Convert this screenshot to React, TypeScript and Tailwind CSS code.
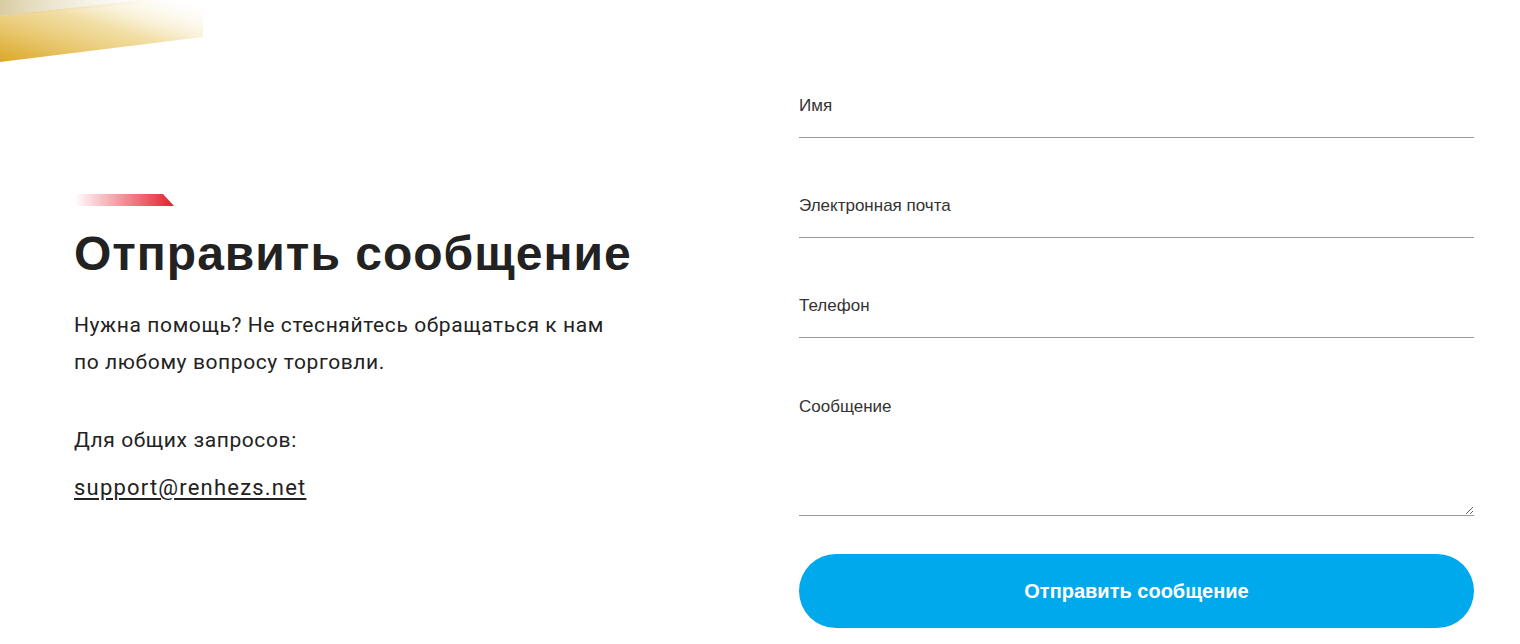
import React from "react";

export default function App() {
  return (
    <div className="relative w-[1520px] h-[644px] bg-white overflow-hidden" style={{ fontFamily: "Roboto, 'Liberation Sans', sans-serif" }}>
      <svg className="absolute left-0 top-0" width="210" height="70" viewBox="0 0 210 70">
        <defs>
          <linearGradient id="gold" x1="0" y1="1" x2="1" y2="0">
            <stop offset="0" stopColor="#dba726" />
            <stop offset="0.55" stopColor="#efd790" stopOpacity="0.8" />
            <stop offset="1" stopColor="#ffffff" stopOpacity="0" />
          </linearGradient>
          <linearGradient id="gold2" x1="0" y1="0" x2="1" y2="0">
            <stop offset="0" stopColor="#cfbf8a" stopOpacity="0.8" />
            <stop offset="1" stopColor="#ffffff" stopOpacity="0" />
          </linearGradient>
        </defs>
        <polygon points="0,0 180,0 0,16" fill="url(#gold2)" />
        <polygon points="0,16 140,0 203,0 203,37 0,62" fill="url(#gold)" />
      </svg>

      <div className="flex h-full">
        <div className="w-[725px] pl-[74px] pt-[194px] text-[#222]">
          <svg width="100" height="12" viewBox="0 0 100 12" className="block">
            <defs>
              <linearGradient id="red" x1="0" y1="0" x2="1" y2="0">
                <stop offset="0" stopColor="#e4202f" stopOpacity="0" />
                <stop offset="1" stopColor="#e4202f" />
              </linearGradient>
            </defs>
            <polygon points="0,0 89,0 100,12 0,12" fill="url(#red)" />
          </svg>
          <h1 className="mt-[20px] text-[48px] leading-[56px] font-bold tracking-[1px]" style={{ fontFamily: "'Liberation Sans', Arial, sans-serif" }}>
            Отправить сообщение
          </h1>
          <p className="mt-[25px] text-[21px] leading-[37px] tracking-[0.6px] w-[545px]">
            Нужна помощь? Не стесняйтесь обращаться к нам по любому вопросу торговли.
          </p>
          <p className="mt-[41px] text-[21px] leading-[37px] tracking-[0.6px]">Для общих запросов:</p>
          <a href="#" className="mt-[10px] block text-[22px] leading-[37px] tracking-[1.2px] underline underline-offset-[3px]">
            support@renhezs.net
          </a>
        </div>

        <div className="w-[675px] ml-[74px] pt-[94px] text-[#333]" style={{ fontFamily: "'Liberation Sans', Arial, sans-serif" }}>
          <form className="flex flex-col">
            <label className="block">
              <span className="block text-[17px] leading-[24px]">Имя</span>
              <input className="block w-full h-[20px] border-b border-[#999] outline-none" />
            </label>
            <label className="block mt-[56px]">
              <span className="block text-[17px] leading-[24px]">Электронная почта</span>
              <input className="block w-full h-[20px] border-b border-[#999] outline-none" />
            </label>
            <label className="block mt-[56px]">
              <span className="block text-[17px] leading-[24px]">Телефон</span>
              <input className="block w-full h-[20px] border-b border-[#999] outline-none" />
            </label>
            <label className="block mt-[57px]">
              <span className="block text-[17px] leading-[24px]">Сообщение</span>
              <textarea className="block w-full h-[97px] border-b border-[#999] outline-none resize-y" />
            </label>
            <button
              type="button"
              className="mt-[38px] h-[74px] w-full rounded-full bg-[#00a8ec] text-white text-[20px] font-bold"
            >
              Отправить сообщение
            </button>
          </form>
        </div>
      </div>
    </div>
  );
}
